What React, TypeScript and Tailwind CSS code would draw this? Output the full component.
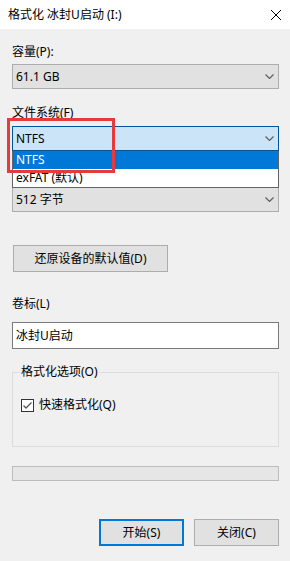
import React from "react";

const Chevron = () => (
  <svg width="9" height="5" viewBox="0 0 9 5" className="shrink-0">
    <polyline points="0.5,0.5 4.5,4.5 8.5,0.5" fill="none" stroke="#5f5f5f" strokeWidth="1.2" />
  </svg>
);

const Combo = ({ text, active = false }: { text: string; active?: boolean }) => (
  <div
    className={`h-[25px] flex items-center justify-between pl-[3px] pr-[3px] border ${
      active ? "bg-[#cce4f7] border-[#005499]" : "bg-[#e1e1e1] border-[#adadad]"
    }`}
  >
    <span className="leading-[16px]">{text}</span>
    <span className="flex items-center w-[12px] justify-center">
      <Chevron />
    </span>
  </div>
);

export default function App() {
  return (
    <div
      className="w-[290px] min-h-[561px] bg-[#f0f0f0] text-[12px] leading-[16px] text-black relative"
      style={{ fontFamily: '"Noto Sans", "Noto Sans CJK SC", sans-serif' }}
    >
      {/* Title bar */}
      <div className="h-[29px] bg-white flex items-center justify-between pl-[8px] pr-[9px]">
        <span className="text-[12px]">格式化 冰封U启动 (I:)</span>
        <svg width="10" height="10" viewBox="0 0 10 10">
          <line x1="0" y1="0" x2="10" y2="10" stroke="#000" strokeWidth="1" />
          <line x1="10" y1="0" x2="0" y2="10" stroke="#000" strokeWidth="1" />
        </svg>
      </div>

      {/* Body */}
      <div className="pl-[12px] pr-[11px] flex flex-col">
        <div className="mt-[15px]">容量(P):</div>
        <div className="mt-[4px]">
          <Combo text="61.1 GB" />
        </div>

        <div className="mt-[16px]">文件系统(F)</div>
        <div className="mt-[5px]">
          <Combo text="NTFS" active />
        </div>

        <div className="mt-[36px]">
          <Combo text="512 字节" />
        </div>

        <div className="mt-[33px] ml-[1px]">
          <button className="w-[155px] h-[27px] bg-[#e1e1e1] border border-[#adadad] text-[12px] leading-[16px]">
            还原设备的默认值(D)
          </button>
        </div>

        <div className="mt-[24px]">卷标(L)</div>
        <div className="mt-[10px] h-[27px] bg-white border border-[#7a7a7a] flex items-center pl-[3px]">
          冰封U启动
        </div>

        <div className="mt-[23px] h-[75px] border border-[#dcdcdc] relative">
          <span className="absolute -top-[9px] left-[7px] px-[1px] bg-[#f0f0f0]">格式化选项(O)</span>
          <div className="mt-[24px] ml-[8px] flex items-center gap-[5px]">
            <div className="w-[13px] h-[13px] border border-[#333333] bg-white flex items-center justify-center">
              <svg width="11" height="11" viewBox="0 0 11 11">
                <polyline points="1.5,5.5 4,8 9.5,2.5" fill="none" stroke="#555" strokeWidth="1.3" />
              </svg>
            </div>
            <span>快速格式化(Q)</span>
          </div>
        </div>

        <div className="mt-[19px] h-[15px] bg-[#e6e6e6] border border-[#bcbcbc]"></div>

        <div className="mt-[38px] flex justify-end gap-[10px]">
          <button className="w-[85px] h-[27px] bg-[#e1e1e1] border-2 border-[#0078d7] text-[12px] leading-[16px]">
            开始(S)
          </button>
          <button className="w-[85px] h-[27px] bg-[#e1e1e1] border border-[#adadad] text-[12px] leading-[16px]">
            关闭(C)
          </button>
        </div>
      </div>

      {/* Dropdown list overlay */}
      <div className="absolute left-[12px] top-[151px] w-[267px] h-[37px] bg-white border border-[#646464] border-t-0 flex flex-col">
        <div className="h-[18px] bg-[#0078d7] text-white flex items-center pl-[3px]">NTFS</div>
        <div className="h-[18px] flex items-center pl-[3px]">exFAT (默认)</div>
      </div>

      {/* Red annotation box */}
      <div className="absolute left-[7px] top-[118px] w-[108px] h-[55px] border-[3px] border-[#e8393b]"></div>
    </div>
  );
}
